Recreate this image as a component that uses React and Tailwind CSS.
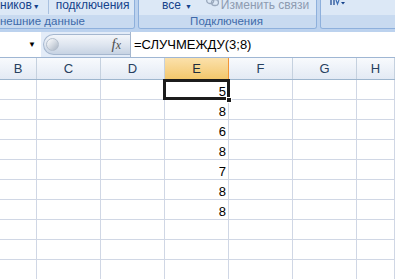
import React from "react";

const cols = [
  { name: "B", w: "w-[37px]" },
  { name: "C", w: "w-[64px]" },
  { name: "D", w: "w-[64px]" },
  { name: "E", w: "w-[64px]" },
  { name: "F", w: "w-[64px]" },
  { name: "G", w: "w-[64px]" },
  { name: "H", w: "flex-1" },
];

const values = [5, 8, 6, 8, 7, 8, 8, null, null, null];

function LinkIcon() {
  return (
    <svg width="13" height="9" viewBox="0 0 13 9" className="mr-[2px] shrink-0">
      <rect x="0.7" y="-2.5" width="7" height="6" rx="3" fill="none" stroke="#9aa9bd" strokeWidth="1.3" />
      <rect x="5.5" y="-0.5" width="7" height="6" rx="3" fill="none" stroke="#9aa9bd" strokeWidth="1.3" />
    </svg>
  );
}

function SortIcon() {
  return (
    <svg width="16" height="8" viewBox="0 0 16 8">
      <path d="M1 0 V5 M4 0 V5" stroke="#15428b" strokeWidth="1.2" />
      <path d="M6 0 L7.5 4 L9 0" fill="none" stroke="#3d6fb6" strokeWidth="1.2" />
      <path d="M11 2 L15 2 L13 4.5 Z" fill="#15428b" />
    </svg>
  );
}

export default function App() {
  return (
    <div className="w-[395px] h-[279px] overflow-hidden bg-white font-['Liberation_Sans',sans-serif] select-none">
      {/* ribbon */}
      <div className="h-[32px] bg-[#bcd2ee] flex gap-[3px] pb-[3px]">
        <div className="w-[135px] flex flex-col border-r border-b border-[#8eb0dc] rounded-br-[3px] overflow-hidden">
          <div className="h-[15px] bg-[#dce8f6] flex items-start whitespace-nowrap text-[12px] leading-[10px] text-[#15428b]">
            <span>ников</span>
            <span className="text-[7px] leading-[7px] ml-[1px] mt-[3px]">▼</span>
            <div className="w-px h-[14px] bg-[#a9c1e0] ml-[8px] mr-[7px]" />
            <span>подключения</span>
          </div>
          <div className="flex-1 bg-[#c8daf0] whitespace-nowrap text-[11.5px] leading-[12px] text-[#3e6aaa]">
            нешние данные
          </div>
        </div>
        <div className="w-[179px] flex flex-col border-x border-b border-[#8eb0dc] rounded-b-[3px] overflow-hidden">
          <div className="h-[15px] bg-[#dce8f6] flex items-start whitespace-nowrap text-[12px] leading-[10px] text-[#15428b]">
            <span className="ml-[23px]">все</span>
            <span className="text-[7px] leading-[7px] ml-[4px] mt-[3px]">▼</span>
            <div className="ml-[14px] flex items-start text-[#8d9bb1]">
              <LinkIcon />
              <span>Изменить связи</span>
            </div>
          </div>
          <div className="flex-1 bg-[#c8daf0] whitespace-nowrap text-[11.5px] leading-[12px] text-[#3e6aaa] text-center pr-[2px]">
            Подключения
          </div>
        </div>
        <div className="flex-1 flex flex-col border-l border-b border-[#8eb0dc] rounded-bl-[3px] overflow-hidden">
          <div className="h-[15px] bg-[#dce8f6] flex items-start pl-[9px]">
            <SortIcon />
          </div>
          <div className="flex-1 bg-[#c8daf0]" />
        </div>
      </div>

      {/* formula bar */}
      <div className="h-[26px] flex border-b border-[#9fb6d3] bg-[#e3ecf8]">
        <div className="w-[41px] bg-white flex items-center justify-end pr-[5px]">
          <span className="text-[8px] leading-none text-black">▼</span>
        </div>
        <div className="w-[89px] flex items-center pl-[2px]">
          <div className="w-[87px] h-[21px] rounded-l-full border border-r-0 border-[#a5b7cf] bg-gradient-to-b from-[#f3f6fa] via-[#dfe6f0] to-[#c7d3e3] flex items-center justify-between pr-[9px]">
            <div className="w-[13px] h-[13px] ml-[2px] rounded-full bg-gradient-to-br from-[#ffffff] via-[#d5dbe3] to-[#a9b4c2] border border-[#b4bfcd]" />
            <span className="font-['Liberation_Serif',serif] italic text-[15px] text-[#505050] leading-none">
              f<span className="text-[12px]">x</span>
            </span>
          </div>
        </div>
        <div className="flex-1 bg-white border-l border-[#a5b7cf] flex items-center pl-[3px] text-[13px] text-black leading-none">
          =СЛУЧМЕЖДУ(3;8)
        </div>
      </div>

      {/* grid */}
      <div className="relative">
        <div className="h-[22px] flex border-b border-[#9eb6ce]">
          {cols.map((c) => (
            <div
              key={c.name}
              className={`${c.w} shrink-0 flex items-center justify-center border-r text-[13px] leading-none ${
                c.name === "E"
                  ? "bg-gradient-to-b from-[#fbe1ab] to-[#f3c76b] border-[#f29536] text-[#1f2d3d]"
                  : "bg-gradient-to-b from-[#f8fafd] to-[#e3eaf4] border-[#c5d1df] text-[#27405f]"
              }`}
            >
              {c.name}
            </div>
          ))}
        </div>
        {values.map((v, i) => (
          <div key={i} className="h-[20px] flex border-b border-[#d0d7e5]">
            {cols.map((c) => (
              <div
                key={c.name}
                className={`${c.w} shrink-0 border-r border-[#d0d7e5] flex items-end justify-end pr-[2px] pb-[1px] text-[13px] leading-[13px] text-black`}
              >
                {c.name === "E" && v !== null ? v : ""}
              </div>
            ))}
          </div>
        ))}
        <div className="absolute left-[163px] top-[21px] w-[67px] h-[21px] border-[3px] border-[#1c1c1c]" />
        <div className="absolute left-[226px] top-[39px] w-[6px] h-[6px] bg-[#1c1c1c] border border-white" />
      </div>
    </div>
  );
}
